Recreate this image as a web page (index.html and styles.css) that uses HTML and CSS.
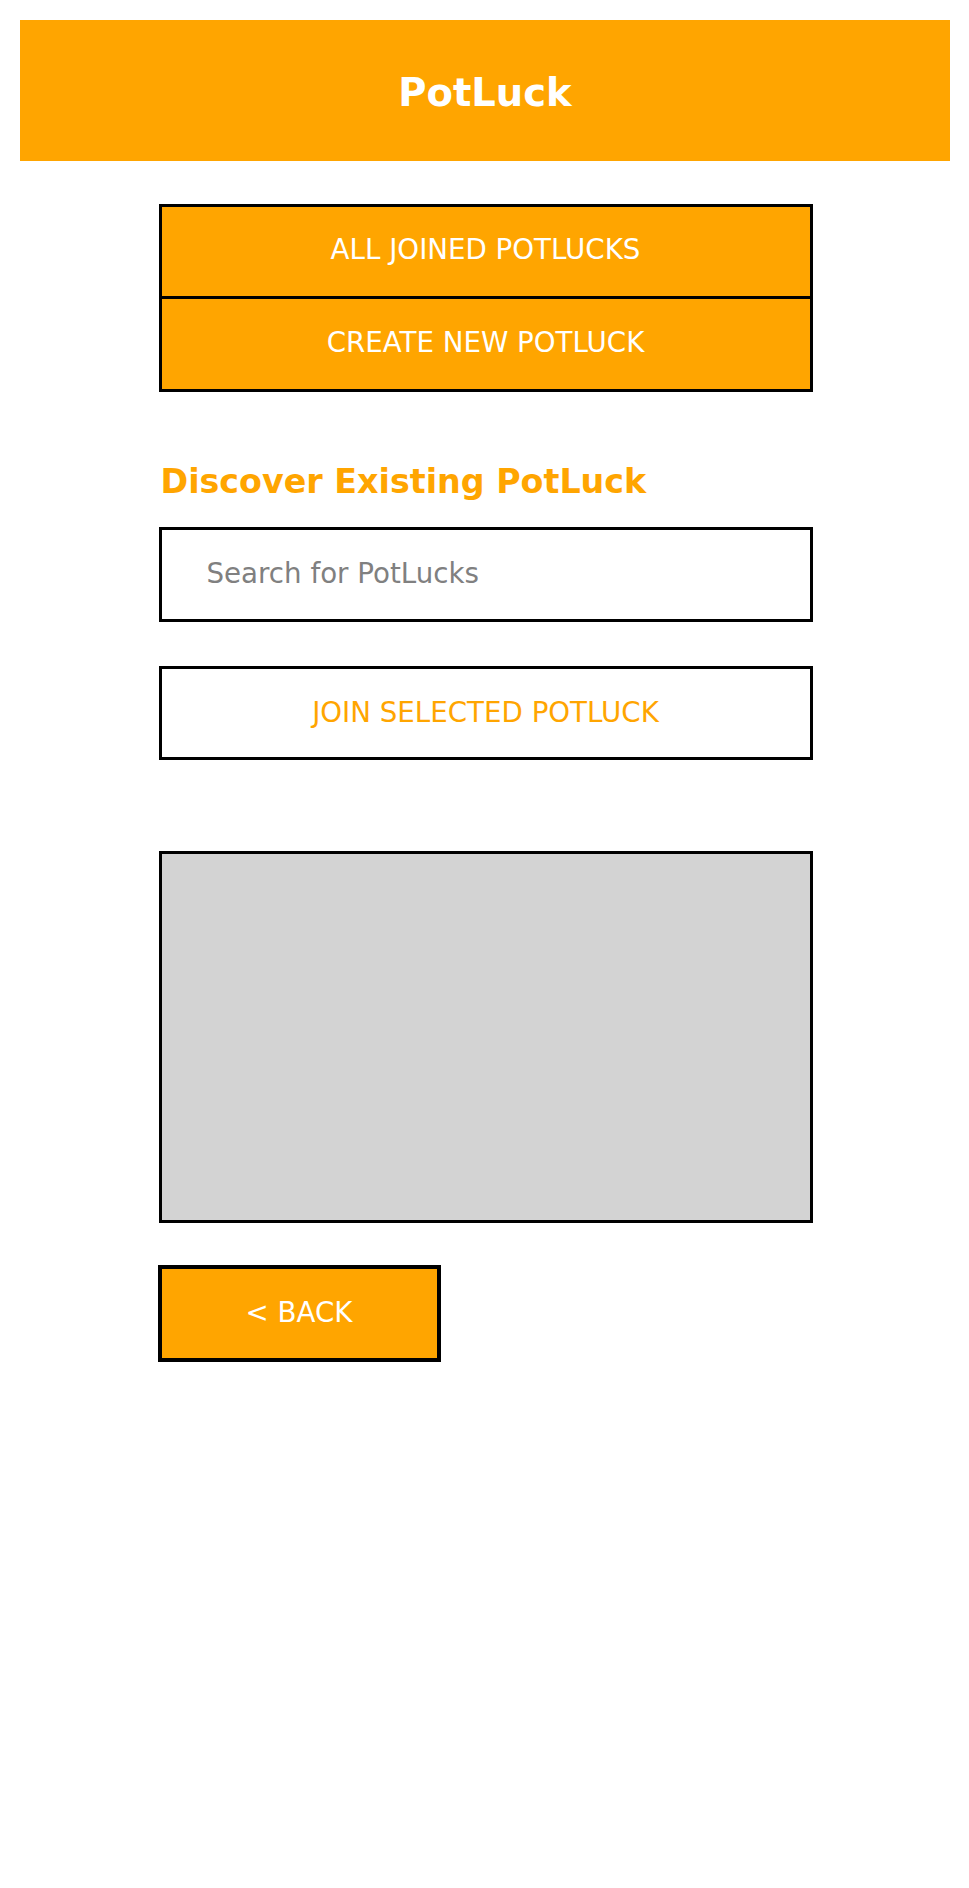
FILE: index.html
```html
<!DOCTYPE html>
<html>
<head>
<meta charset="utf-8">
<title>PotLuck</title>
<link rel="stylesheet" href="styles.css">
</head>
<body>
<header class="app-header">
  <h1 class="app-title">PotLuck</h1>
</header>
<main class="content">
  <div class="nav-group">
    <button class="nav-btn">ALL JOINED POTLUCKS</button>
    <button class="nav-btn nav-btn-second">CREATE NEW POTLUCK</button>
  </div>
  <h2 class="section-title">Discover Existing PotLuck</h2>
  <input class="search-input" type="text" placeholder="Search for PotLucks">
  <button class="join-btn">JOIN SELECTED POTLUCK</button>
  <div class="results"></div>
  <button class="back-btn">&lt; BACK</button>
</main>
</body>
</html>
```

FILE: styles.css
```css
html, body {
  margin: 0;
  padding: 0;
  background: #ffffff;
}

body {
  font-family: "DejaVu Sans", sans-serif;
}

.app-header {
  margin: 20px 19px 0 20px;
  height: 141px;
  background: #ffa500;
  display: flex;
  align-items: center;
  justify-content: center;
}

.app-title {
  margin: 0;
  padding-top: 5px;
  color: #ffffff;
  font-size: 38.5px;
  font-weight: bold;
  line-height: 1;
}

.content {
  width: 654px;
  margin: 43px auto 0 auto;
  display: flex;
  flex-direction: column;
  position: relative;
  left: 1px;
}

.nav-group {
  display: flex;
  flex-direction: column;
  border: 3px solid #000;
  background: #ffa500;
}

.nav-btn {
  height: 89px;
  border: none;
  margin: 0;
  padding: 0 0 4px 0;
  background: #ffa500;
  color: #ffffff;
  font-family: "DejaVu Sans", sans-serif;
  font-size: 27.7px;
}

.nav-btn-second {
  height: 93px;
  border-top: 3px solid #000;
}

.section-title {
  margin: 70px 0 0 0;
  padding-left: 2px;
  height: 40px;
  line-height: 40px;
  color: #ffa500;
  font-size: 33.3px;
  font-weight: bold;
}

.search-input {
  margin-top: 25px;
  box-sizing: border-box;
  height: 95px;
  border: 3px solid #000;
  border-radius: 0;
  padding: 0 0 2px 45px;
  font-family: "DejaVu Sans", sans-serif;
  font-size: 27.7px;
  color: #333;
  outline: none;
}

.search-input::placeholder {
  color: #808080;
}

.join-btn {
  margin-top: 44px;
  box-sizing: border-box;
  height: 94px;
  border: 3px solid #000;
  background: #ffffff;
  color: #ffa500;
  font-family: "DejaVu Sans", sans-serif;
  font-size: 27.7px;
  padding: 0 0 2px 0;
}

.results {
  margin-top: 91px;
  box-sizing: border-box;
  height: 372px;
  border: 3px solid #000;
  background: #d3d3d3;
}

.back-btn {
  margin-top: 42px;
  box-sizing: border-box;
  width: 283px;
  height: 97px;
  border: 4px solid #000;
  background: #ffa500;
  color: #ffffff;
  font-family: "DejaVu Sans", sans-serif;
  font-size: 27.7px;
  padding: 0 0 2px 0;
  position: relative;
  left: -1px;
}
```
